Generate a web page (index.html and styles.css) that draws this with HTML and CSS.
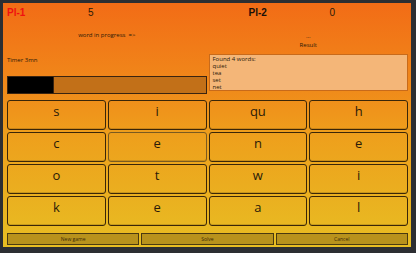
FILE: index.html
```html
<!DOCTYPE html>
<html>
<head>
<meta charset="utf-8">
<link rel="stylesheet" href="styles.css">
</head>
<body>
<div class="app">
  <div class="scores">
    <div class="half">
      <span class="player p1">Pl-1</span>
      <span class="score s1">5</span>
    </div>
    <div class="half">
      <span class="player p2">Pl-2</span>
      <span class="score s2">0</span>
    </div>
  </div>
  <div class="middle">
    <div class="col-left">
      <div class="status">word in progress&nbsp; =&gt;</div>
      <div class="timer">Timer 3mn</div>
      <div class="bar"><div class="fill" style="width:23%"></div></div>
    </div>
    <div class="col-right">
      <div class="dots">...</div>
      <div class="result">Result</div>
      <div class="words">
        <div>Found 4 words:</div>
        <div>quiet</div>
        <div>tea</div>
        <div>set</div>
        <div>net</div>
      </div>
    </div>
  </div>
  <div class="board">
    <div class="tile">s</div>
    <div class="tile">i</div>
    <div class="tile">qu</div>
    <div class="tile">h</div>
    <div class="tile">c</div>
    <div class="tile tile-hover">e</div>
    <div class="tile">n</div>
    <div class="tile">e</div>
    <div class="tile">o</div>
    <div class="tile">t</div>
    <div class="tile">w</div>
    <div class="tile">i</div>
    <div class="tile">k</div>
    <div class="tile">e</div>
    <div class="tile">a</div>
    <div class="tile">l</div>
  </div>
  <div class="actions">
    <div class="action">New game</div>
    <div class="action">Solve</div>
    <div class="action">Cancel</div>
  </div>
</div>
</body>
</html>
```

FILE: styles.css
```css
html, body {
  margin: 0;
  padding: 0;
  background: #2c2e32;
}
body {
  width: 416px;
  height: 253px;
  overflow: hidden;
  font-family: "Open Sans", "Noto Sans", sans-serif;
  color: #2a1a08;
}
.app {
  margin: 3px 0 0 3px;
  width: 408px;
  height: 244px;
  box-sizing: border-box;
  padding: 0 3px 0 4px;
  background: linear-gradient(to bottom, #f26c16 0%, #f08a1a 35%, #eea01c 55%, #eab020 80%, #e8be22 100%);
  overflow: hidden;
}
.scores {
  display: flex;
  gap: 2px;
  height: 20px;
  padding-top: 3px;
  box-sizing: border-box;
}
.half {
  flex: 1;
  display: flex;
  font-size: 10px;
  line-height: 13px;
}
.player {
  font-weight: bold;
  font-family: "Liberation Sans", sans-serif;
}
.p1 { color: #f01010; width: 81px; }
.p2 { color: #1a1008; margin-left: 40px; width: 81px; }
.score { font-family: "Liberation Sans", sans-serif; }

.middle {
  display: flex;
  gap: 2px;
  height: 71px;
}
.col-left, .col-right {
  flex: 1;
  display: flex;
  flex-direction: column;
  font-size: 6px;
  line-height: 8px;
}
.status {
  margin-top: 8px;
  text-align: center;
}
.timer {
  margin-top: 17px;
}
.bar {
  margin-top: 12px;
  height: 18px;
  box-sizing: border-box;
  border: 1px solid #3a2410;
  background: #c27018;
  display: flex;
}
.fill {
  background: #000;
  border-right: 1px solid #3a2410;
}
.dots {
  margin-top: 10px;
  text-align: center;
  line-height: 6px;
}
.result {
  margin-top: 2px;
  text-align: center;
}
.words {
  margin-top: 5px;
  height: 37px;
  box-sizing: border-box;
  border: 1px solid #c86a1a;
  background: #f4b678;
  padding: 1px 3px;
  overflow: hidden;
  line-height: 7px;
}
.board {
  margin-top: 6px;
  display: grid;
  grid-template-columns: repeat(4, 1fr);
  grid-auto-rows: 30px;
  gap: 2px;
}
.tile {
  box-sizing: border-box;
  border: 1px solid #3a2608;
  border-radius: 3px;
  text-align: center;
  font-size: 13px;
  line-height: 16px;
  padding-top: 2px;
  color: #2a1a08;
  box-shadow: inset 0 -1px 0 rgba(0,0,0,0.15);
}
.tile-hover {
  border-color: #7a5a20;
}
.actions {
  margin-top: 7px;
  display: grid;
  grid-template-columns: 1fr 1fr 1fr;
  gap: 2px;
}
.action {
  height: 12px;
  box-sizing: border-box;
  border: 1px solid #4a3a10;
  background: #b8921c;
  text-align: center;
  font-size: 5px;
  line-height: 10px;
  color: #3a2a08;
}
```
